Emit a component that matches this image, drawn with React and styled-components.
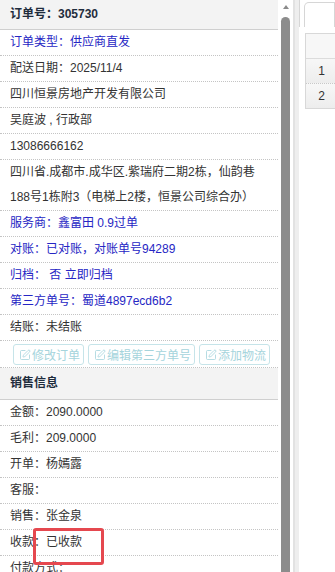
import React from "react";
import styled, { createGlobalStyle } from "styled-components";
import { SquarePen } from "lucide-react";

const GlobalStyle = createGlobalStyle`
  html, body {
    margin: 0;
    padding: 0;
    background: #fff;
    overflow: hidden;
  }
  body {
    font-family: "Liberation Sans", "Noto Sans CJK SC", sans-serif;
    font-size: 12px;
    color: #333;
  }
`;

const orderRows = [
  { text: "订单类型：供应商直发", blue: true },
  { text: "配送日期：2025/11/4" },
  { text: "四川恒景房地产开发有限公司" },
  { text: "吴庭波 , 行政部" },
  { text: "13086666162" },
  { text: "四川省.成都市.成华区.紫瑞府二期2栋，仙韵巷188号1栋附3（电梯上2楼，恒景公司综合办）" },
  { text: "服务商：鑫富田 0.9过单", blue: true },
  { text: "对账：已对账，对账单号94289", blue: true },
  { text: "归档： 否 立即归档", blue: true },
  { text: "第三方单号：蜀道4897ecd6b2", blue: true },
  { text: "结账：未结账" },
];

const salesRows = [
  "金额：2090.0000",
  "毛利：209.0000",
  "开单：杨嫣露",
  "客服：",
  "销售：张金泉",
  "收款：已收款",
  "付款方式：",
];

const actions = ["修改订单", "编辑第三方单号", "添加物流"];

function App() {
  return (
    <>
      <GlobalStyle />
      <Page>
        <ScrollArea>
          <Panel>
            <SectionHead $first>订单号：305730</SectionHead>
            {orderRows.map((r) => (
              <Row key={r.text} $blue={r.blue}>
                {r.text}
              </Row>
            ))}
            <ActionRow>
              {actions.map((a) => (
                <ActionButton key={a} disabled>
                  <SquarePen size={12} strokeWidth={1.7} />
                  {a}
                </ActionButton>
              ))}
            </ActionRow>
            <SectionHead>销售信息</SectionHead>
            {salesRows.map((s) => (
              <Row key={s}>{s}</Row>
            ))}
            <Mark />
          </Panel>
          <Track>
            <Arrow />
            <Thumb />
          </Track>
        </ScrollArea>
        <Splitter />
        <RightPanel>
          <TabBar>
            <Tab />
          </TabBar>
          <Grid>
            <GridHead />
            <GridRow>1</GridRow>
            <GridRow $last>2</GridRow>
          </Grid>
        </RightPanel>
      </Page>
    </>
  );
}

export default App;

const Page = styled.div`
  display: flex;
  width: 335px;
  height: 572px;
  overflow: hidden;
`;

const ScrollArea = styled.div`
  display: flex;
  flex: none;
  height: 100%;
`;

const Panel = styled.div`
  position: relative;
  width: 278px;
  flex: none;
`;

const SectionHead = styled.div`
  height: ${(p) => (p.$first ? "29px" : "31px")};
  line-height: ${(p) => (p.$first ? "29px" : "31px")};
  padding: 0 10px;
  background: #f3f3f3;
  border-bottom: 1px solid #cfcfcf;
  font-weight: bold;
  color: #1f2d3d;
`;

const Row = styled.div`
  line-height: 25px;
  padding: 0 10px;
  border-bottom: 1px dotted #c4c4c4;
  color: ${(p) => (p.$blue ? "#2626c4" : "#333")};
`;

const ActionRow = styled.div`
  display: flex;
  gap: 4px;
  padding: 3px 0 2px 13px;
  border-bottom: 1px dotted #c4c4c4;
`;

const ActionButton = styled.button`
  display: flex;
  align-items: center;
  gap: 1px;
  box-sizing: border-box;
  height: 21px;
  padding: 0 3px 0 5px;
  border: 1px solid #c6e4e9;
  border-radius: 3px;
  background: #fff;
  color: #a5d4dc;
  font-family: inherit;
  font-size: 12px;
  cursor: default;

  svg {
    color: #a9d6de;
    flex: none;
  }
`;

const Mark = styled.div`
  position: absolute;
  left: 33px;
  top: 528px;
  width: 65px;
  height: 31px;
  border: 3px solid #e5484f;
  border-radius: 3px;
  pointer-events: none;
`;

const Track = styled.div`
  width: 15px;
  flex: none;
  display: flex;
  flex-direction: column;
  align-items: center;
  background: #fff;
`;

const Arrow = styled.div`
  width: 0;
  height: 0;
  margin-top: 5px;
  border-left: 3.5px solid transparent;
  border-right: 3.5px solid transparent;
  border-bottom: 4px solid #8a8a8a;
`;

const Thumb = styled.div`
  width: 9px;
  flex: 1;
  margin-top: 8px;
  margin-bottom: -10px;
  background: #8c8c8c;
  border-radius: 4.5px 4.5px 0 0;
`;

const Splitter = styled.div`
  width: 6px;
  flex: none;
  background: #eeeeee;
  border-left: 2px solid #e2e2e2;
  box-sizing: border-box;
`;

const RightPanel = styled.div`
  flex: 1;
  min-width: 0;
  overflow: hidden;
`;

const TabBar = styled.div`
  height: 27px;
  display: flex;
  align-items: flex-end;
  padding-left: 4px;
  border-left: 1px solid #d6d6d6;
  box-sizing: border-box;
`;

const Tab = styled.div`
  width: 120px;
  height: 25px;
  border: 1px solid #d6d6d6;
  border-bottom: none;
  border-radius: 5px 0 0 0;
  box-sizing: border-box;
`;

const Grid = styled.div`
  margin: 6px 0 0 6px;
  width: 60px;
  border: 1px solid #d8d8d8;
  border-right: none;
`;

const GridHead = styled.div`
  height: 24px;
  background: #f7f7f7;
  border-bottom: 1px solid #dcdcdc;
`;

const GridRow = styled.div`
  width: 31px;
  height: 24px;
  line-height: 24px;
  text-align: center;
  background: linear-gradient(#f7f7f7, #ededed);
  border-bottom: ${(p) => (p.$last ? "none" : "1px dotted #c8c8c8")};
  color: #333;
  font-size: 12px;
`;
